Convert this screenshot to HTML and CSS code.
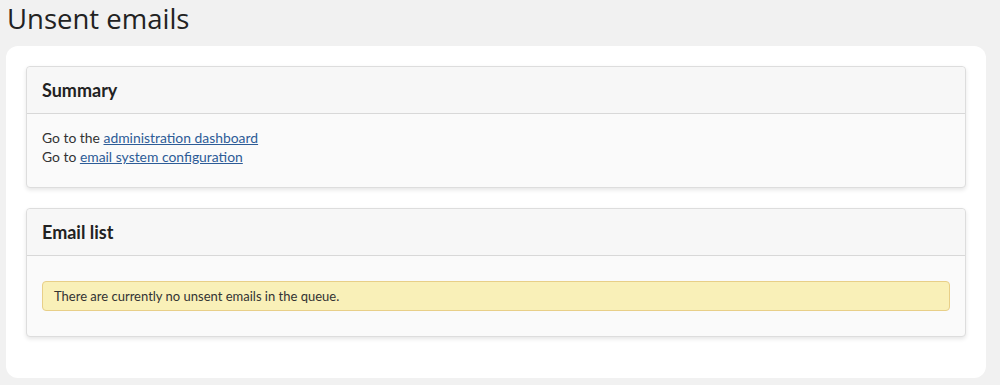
FILE: index.html
```html
<!DOCTYPE html>
<html lang="en">
<head>
    <meta charset="UTF-8">
    <title>Unsent emails</title>
    <link rel="stylesheet" href="styles.css">
</head>
<body>

<h1 class="page-title">Unsent emails</h1>

<div class="content">
    <div class="panel">
        <div class="panel-heading">Summary</div>
        <div class="panel-body">
            <div>Go to the <a href="#">administration dashboard</a></div>
            <div>Go to <a href="#">email system configuration</a></div>
        </div>
    </div>

    <div class="panel">
        <div class="panel-heading">Email list</div>
        <div class="panel-body list-body">
            <div class="alert">There are currently no unsent emails in the queue.</div>
        </div>
    </div>
</div>

</body>
</html>
```

FILE: styles.css
```css
body {
    margin: 0;
    padding: 0 14px 0 6px;
    background-color: #f1f1f1;
    font-family: Lato, "Open Sans", sans-serif;
    color: #333;
    height: 385px;
    overflow: hidden;
}

.page-title {
    margin: 0;
    padding: 1px 0 0 1px;
    height: 45px;
    font-family: "Open Sans", sans-serif;
    font-size: 27.5px;
    font-weight: 500;
    color: #222;
    line-height: 36px;
}

.content {
    background-color: #fff;
    border-radius: 12px;
    padding: 20px 20px 21px;
}

.panel {
    background-color: #fafafa;
    border: 1px solid #ddd;
    border-radius: 4px;
    box-shadow: 0 2px 4px rgba(0, 0, 0, 0.1);
    margin-bottom: 20px;
}

.panel-heading {
    background-color: #f7f7f7;
    border-bottom: 1px solid #d8d8d8;
    border-radius: 4px 4px 0 0;
    height: 46px;
    line-height: 46px;
    padding: 0 15px;
    font-size: 18px;
    font-weight: 700;
    color: #222;
}

.panel-body {
    padding: 14px 15px 21px;
    font-size: 13.9px;
    line-height: 19px;
}

.panel-body a {
    color: #2d5c97;
}

.list-body {
    padding: 25px 15px 25px;
}

.alert {
    background-color: #f9f0b8;
    border: 1px solid #e8cf88;
    border-radius: 4px;
    height: 28px;
    line-height: 28px;
    padding: 0 11px;
    font-size: 13px;
    color: #333;
}
```
